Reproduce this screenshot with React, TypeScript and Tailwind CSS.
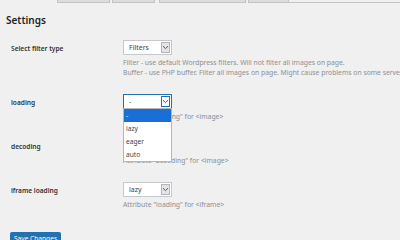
import React from "react";

const Arrow = ({ focus }: { focus?: boolean }) => (
  <div
    className={`flex h-[11px] w-[9px] items-center justify-center border ${
      focus ? "border-[#2271b1] bg-white" : "border-[#b4b6ba] bg-[#e4e4e6]"
    }`}
  >
    <svg width="7" height="5" viewBox="0 0 7 5">
      <path d="M1 1.2 L3.5 3.6 L6 1.2" fill="none" stroke="#50575e" strokeWidth="1" />
    </svg>
  </div>
);

const Select = ({ value, focus }: { value: string; focus?: boolean }) => (
  <div
    className={`flex h-[15px] w-[49px] items-center justify-between bg-white pl-[5px] pr-[1px] ${
      focus ? "border border-[#2271b1]" : "border border-[#c7c8cb]"
    }`}
  >
    <span className="text-[7px] leading-none text-[#3c434a]">{value}</span>
    <Arrow focus={focus} />
  </div>
);

const Desc = ({ children }: { children: React.ReactNode }) => (
  <p className="whitespace-nowrap text-[6.8px] leading-[10px] text-[#8a8f94]">{children}</p>
);

const Label = ({ children }: { children: React.ReactNode }) => (
  <div className="w-[112px] shrink-0 pt-[4px] text-[6.6px] font-semibold leading-[10px] text-[#2c3338]">
    {children}
  </div>
);

export default function App() {
  return (
    <div
      className="h-[240px] w-[400px] overflow-hidden bg-[#f0f0f1]"
      style={{ fontFamily: '"Noto Sans", "Open Sans", sans-serif' }}
    >
      {/* tabs strip (cut off) */}
      <div className="flex h-[4px] items-start">
        <div className="ml-[57px] flex h-[3px]">
          <div className="w-[53px] border-x border-b border-[#c3c4c7] bg-[#dcdcde]" />
          <div className="ml-[2px] w-[43px] border-x border-b border-[#c3c4c7] bg-[#dcdcde]" />
          <div className="ml-[4px] w-[87px] border-x border-b border-[#c3c4c7] bg-[#dcdcde]" />
          <div className="ml-[2px] w-[41px] border-x border-b border-[#c3c4c7] bg-[#dcdcde]" />
        </div>
        <div className="mt-[2px] h-[1px] flex-1 bg-[#c3c4c7]" />
      </div>

      <h2 className="ml-[6px] mt-[10px] text-[10px] font-semibold leading-[12px] text-[#1d2327]">
        Settings
      </h2>

      <div className="ml-[11px] mt-[14px] flex flex-col">
        {/* select filter type */}
        <div className="flex h-[54px]">
          <Label>Select filter type</Label>
          <div className="flex flex-col">
            <Select value="Filters" />
            <div className="mt-[3px]">
              <Desc>Filter - use default Wordpress filters. Will not filter all images on page.</Desc>
              <Desc>Buffer - use PHP buffer. Filter all images on page. Might cause problems on some servers</Desc>
            </div>
          </div>
        </div>

        {/* loading */}
        <div className="flex h-[44px]">
          <Label>loading</Label>
          <div className="relative flex flex-col">
            <Select value="-" focus />
            <div className="mt-[3px]">
              <Desc>Attribute "loading" for &lt;image&gt;</Desc>
            </div>
            <div className="absolute left-0 top-[14px] z-10 w-[49px] border border-[#b4b6ba] bg-white text-[6.6px] text-[#3c434a]">
              <div className="h-[13px] bg-[#1a6fd6] pl-[2px] leading-[13px] text-white">-</div>
              <div className="h-[13px] pl-[2px] leading-[13px]">lazy</div>
              <div className="h-[13px] pl-[2px] leading-[13px]">eager</div>
              <div className="h-[13px] pl-[2px] leading-[13px]">auto</div>
            </div>
          </div>
        </div>

        {/* decoding */}
        <div className="flex h-[44px]">
          <Label>decoding</Label>
          <div className="flex flex-col">
            <Select value="-" />
            <div className="mt-[3px]">
              <Desc>Attribute "decoding" for &lt;image&gt;</Desc>
            </div>
          </div>
        </div>

        {/* iframe loading */}
        <div className="flex h-[44px]">
          <Label>iframe loading</Label>
          <div className="flex flex-col">
            <Select value="lazy" />
            <div className="mt-[3px]">
              <Desc>Attribute "loading" for &lt;iframe&gt;</Desc>
            </div>
          </div>
        </div>
      </div>

      <button className="ml-[10px] mt-[6px] block h-[14px] rounded-[2px] bg-[#2271b1] px-[4px] text-[6.6px] leading-[14px] text-white">
        Save Changes
      </button>
    </div>
  );
}
